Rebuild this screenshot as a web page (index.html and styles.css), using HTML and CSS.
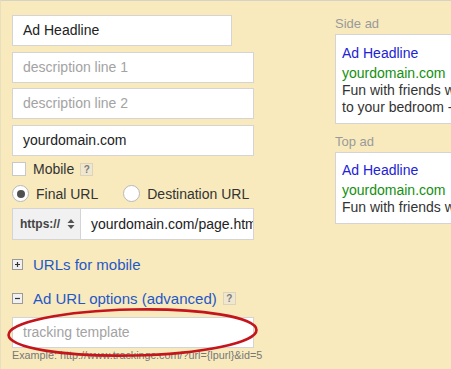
FILE: index.html
```html
<!DOCTYPE html>
<html>
<head>
<meta charset="utf-8">
<link rel="stylesheet" href="styles.css">
</head>
<body>
<div class="page">
  <div class="left">
    <div class="field short">Ad Headline</div>
    <div class="field ph gap6">description line 1</div>
    <div class="field ph gap5">description line 2</div>
    <div class="field gap6">yourdomain.com</div>
    <div class="row mobile-row">
      <span class="checkbox"></span>
      <span class="lbl">Mobile</span>
      <span class="help">?</span>
    </div>
    <div class="row radio-row">
      <span class="radio on"></span>
      <span class="lbl">Final URL</span>
      <span class="radio second"></span>
      <span class="lbl">Destination URL</span>
    </div>
    <div class="url-row">
      <div class="proto">
        <span>https://</span>
        <svg class="arrows" width="8" height="12" viewBox="0 0 8 12"><path d="M4 1 L7.5 5 L0.5 5 Z M4 11 L7.5 7 L0.5 7 Z" fill="#555"/></svg>
      </div>
      <div class="url-input">yourdomain.com/page.htm</div>
    </div>
    <div class="row toggle first-toggle">
      <svg class="tog" width="11" height="11" viewBox="0 0 11 11"><rect x="0.5" y="0.5" width="10" height="10" fill="#f1f1f1" stroke="#9a9a9a"/><path d="M3 5.5 H8 M5.5 3 V8" stroke="#333" stroke-width="1.2"/></svg>
      <span class="link">URLs for mobile</span>
    </div>
    <div class="row toggle second-toggle">
      <svg class="tog" width="11" height="11" viewBox="0 0 11 11"><rect x="0.5" y="0.5" width="10" height="10" fill="#f1f1f1" stroke="#9a9a9a"/><path d="M3 5.5 H8" stroke="#333" stroke-width="1.2"/></svg>
      <span class="link">Ad URL options (advanced)</span>
      <span class="help help-adv">?</span>
    </div>
    <div class="field ph tracking">tracking template</div>
    <div class="example">Example: http://www.trackingc.com/?url={lpurl}&amp;id=5</div>
  </div>
  <div class="right">
    <div class="ad-label">Side ad</div>
    <div class="ad-box">
      <div class="ad-head">Ad Headline</div>
      <div class="ad-url">yourdomain.com</div>
      <div class="ad-text">Fun with friends who come over</div>
      <div class="ad-text">to your bedroom - the best</div>
    </div>
    <div class="ad-label top-label">Top ad</div>
    <div class="ad-box">
      <div class="ad-head">Ad Headline</div>
      <div class="ad-url">yourdomain.com</div>
      <div class="ad-text">Fun with friends who come over</div>
    </div>
  </div>
  <svg class="ring" width="451" height="369" viewBox="0 0 451 369">
    <ellipse cx="132.5" cy="332.5" rx="124" ry="23" fill="none" stroke="#c4141c" stroke-width="2.6" transform="rotate(-1.2 132.5 332.5)"/>
  </svg>
</div>
</body>
</html>
```
FILE: styles.css
```css
html, body {
  margin: 0;
  padding: 0;
  overflow: hidden;
  background: #f8eabd;
}
body {
  font-family: "Liberation Sans", Arial, sans-serif;
  width: 451px;
  height: 369px;
}
.page {
  position: relative;
  display: flex;
  box-sizing: border-box;
  width: 451px;
  height: 369px;
  border-top: 1px solid #d6d3c6;
  border-left: 1px solid #e9dfbe;
  padding: 14px 0 0 11px;
}
.left {
  width: 242px;
  flex: none;
  display: flex;
  flex-direction: column;
}
.field {
  box-sizing: border-box;
  height: 31px;
  background: #fff;
  border: 1px solid #d4d4d4;
  padding-left: 10px;
  font-size: 14px;
  line-height: 29px;
  color: #222;
  white-space: nowrap;
  overflow: hidden;
}
.field.short { width: 220px; }
.field.ph { color: #a3a3a3; }
.gap6 { margin-top: 6px; }
.gap5 { margin-top: 5px; }
.row {
  display: flex;
  align-items: center;
  font-size: 14px;
  color: #333;
}
.mobile-row {
  margin-top: 6px;
  height: 14px;
}
.checkbox {
  box-sizing: border-box;
  width: 14px;
  height: 14px;
  background: #fff;
  border: 1px solid #c8c8c8;
  margin-right: 7px;
}
.help {
  box-sizing: border-box;
  width: 13px;
  height: 13px;
  background: #efe7cf;
  border: 1px solid #dcd3b8;
  color: #7c7c7c;
  font-size: 10px;
  font-weight: bold;
  line-height: 11px;
  text-align: center;
  margin-left: 6px;
}
.radio-row {
  margin-top: 9px;
  height: 17px;
}
.radio {
  box-sizing: border-box;
  width: 17px;
  height: 17px;
  border-radius: 50%;
  background: #fff;
  border: 1px solid #b8b8b8;
  margin-right: 7px;
  position: relative;
}
.radio.on::after {
  content: "";
  position: absolute;
  left: 3.5px;
  top: 3.5px;
  width: 8px;
  height: 8px;
  border-radius: 50%;
  background: #505050;
}
.radio.second { margin-left: 25px; }
.url-row {
  margin-top: 6px;
  display: flex;
  height: 32px;
}
.proto {
  box-sizing: border-box;
  width: 68px;
  height: 32px;
  background: #f1f1f1;
  border: 1px solid #d4d4d4;
  border-right: none;
  display: flex;
  align-items: center;
  padding-left: 7px;
  font-size: 12px;
  font-weight: bold;
  color: #444;
}
.arrows { margin-left: 7px; }
.url-input {
  box-sizing: border-box;
  flex: 1;
  height: 32px;
  background: #fff;
  border: 1px solid #d4d4d4;
  padding-left: 10px;
  font-size: 14px;
  line-height: 30px;
  color: #222;
  white-space: nowrap;
  overflow: hidden;
}
.toggle { height: 20px; }
.first-toggle { margin-top: 14px; }
.second-toggle { margin-top: 14px; }
.tog { margin-right: 10px; flex: none; }
.link {
  font-size: 15px;
  color: #1f58c8;
}
.help-adv { margin-left: 6px; }
.tracking { margin-top: 9px; }
.example {
  font-size: 10.8px;
  line-height: 14px;
  color: #777;
  margin-top: 0px;
  white-space: nowrap;
}
.right {
  margin-left: 81px;
  flex: none;
  width: 220px;
}
.ad-label {
  font-size: 13px;
  line-height: 16px;
  color: #9a9a9a;
  margin-top: 1px;
}
.top-label { margin-top: 10px; }
.ad-box {
  margin-top: 2px;
  box-sizing: border-box;
  background: #fff;
  border: 1px solid #d4d4d4;
  padding: 9px 6px 7px 6px;
  font-size: 14px;
  line-height: 17px;
  white-space: nowrap;
}
.ad-head { color: #2222d6; margin-top: 0.5px; }
.ad-url { color: #14900f; margin-top: 3px; }
.ad-text { color: #333; }
.ring {
  position: absolute;
  left: -1px;
  top: -1px;
  pointer-events: none;
}
```
